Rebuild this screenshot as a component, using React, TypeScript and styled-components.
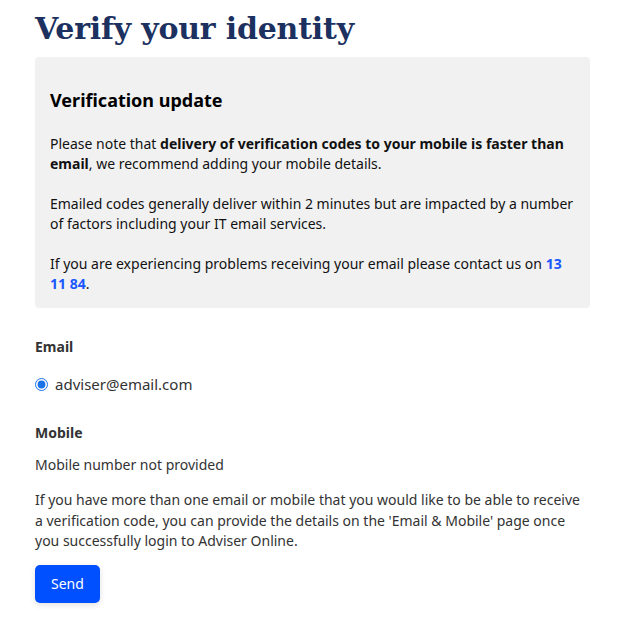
import React from 'react'
import styled, {createGlobalStyle} from 'styled-components'

const GlobalStyle = createGlobalStyle`
    body {
        margin: 0;
        background: #ffffff;
        font-family: "Noto Sans", "Open Sans", sans-serif;
    }
`

const Page = styled.main`
    width: 555px;
    padding: 8px 0 24px 35px;
`

const PageTitle = styled.h1`
    margin: 0 0 7px;
    font-family: "DejaVu Serif", "Liberation Serif", serif;
    font-size: 30px;
    line-height: 42px;
    font-weight: 700;
    color: #1c3160;
    letter-spacing: -0.2px;
`

const Notice = styled.section`
    background: #f1f1f1;
    border-radius: 4px;
    padding: 28px 15px 14px;
    color: #111111;
`

const NoticeTitle = styled.h2`
    margin: 0 0 19px;
    font-size: 18px;
    line-height: 30px;
    font-weight: 700;
    color: #000000;
`

const Para = styled.p`
    margin: 0 0 20px;
    font-size: 14px;
    line-height: 20px;
    color: #111111;

    &:last-child {
        margin-bottom: 0;
    }
`

const Phone = styled.a`
    color: #1a57ff;
    font-weight: 700;
    text-decoration: none;
`

const FieldLabel = styled.h3`
    margin: 29px 0 0;
    font-size: 14px;
    line-height: 20px;
    font-weight: 700;
    color: #333333;
`

const RadioRow = styled.label`
    display: flex;
    align-items: center;
    gap: 7px;
    margin: 17px 0 0;
    font-size: 15px;
    line-height: 20px;
    color: #333333;
`

const Radio = styled.input.attrs({type: 'radio'})`
    margin: 0;
    width: 13px;
    height: 13px;
    accent-color: #1a73e8;
`

const Static = styled.p`
    margin: 12px 0 0;
    font-size: 14px;
    line-height: 20px;
    color: #333333;
`

const Help = styled.p`
    margin: 15px 0 0;
    font-size: 14px;
    line-height: 20.5px;
    color: #333333;
`

const SendButton = styled.button`
    margin-top: 13px;
    height: 38px;
    padding: 0 16px;
    border: none;
    border-radius: 5px;
    background: #0050ff;
    color: #ffffff;
    font-family: "Noto Sans", "Open Sans", sans-serif;
    font-size: 14px;
    box-shadow: 0 2px 6px rgba(0, 0, 0, 0.12);
    cursor: pointer;
`

export default function App() {
    return (
        <>
            <GlobalStyle/>
            <Page>
                <PageTitle>Verify your identity</PageTitle>
                <Notice>
                    <NoticeTitle>Verification update</NoticeTitle>
                    <Para>
                        Please note that <b>delivery of verification codes to your mobile is faster than
                        email</b>, we recommend adding your mobile details.
                    </Para>
                    <Para>
                        Emailed codes generally deliver within 2 minutes but are impacted by a number
                        of factors including your IT email services.
                    </Para>
                    <Para>
                        If you are experiencing problems receiving your email please contact us on{' '}
                        <Phone href="#">13 11 84</Phone>.
                    </Para>
                </Notice>

                <FieldLabel>Email</FieldLabel>
                <RadioRow>
                    <Radio name="channel" defaultChecked/>
                    adviser@email.com
                </RadioRow>

                <FieldLabel>Mobile</FieldLabel>
                <Static>Mobile number not provided</Static>
                <Help>
                    If you have more than one email or mobile that you would like to be able to receive
                    a verification code, you can provide the details on the 'Email &amp; Mobile' page once
                    you successfully login to Adviser Online.
                </Help>
                <SendButton>Send</SendButton>
            </Page>
        </>
    )
}
